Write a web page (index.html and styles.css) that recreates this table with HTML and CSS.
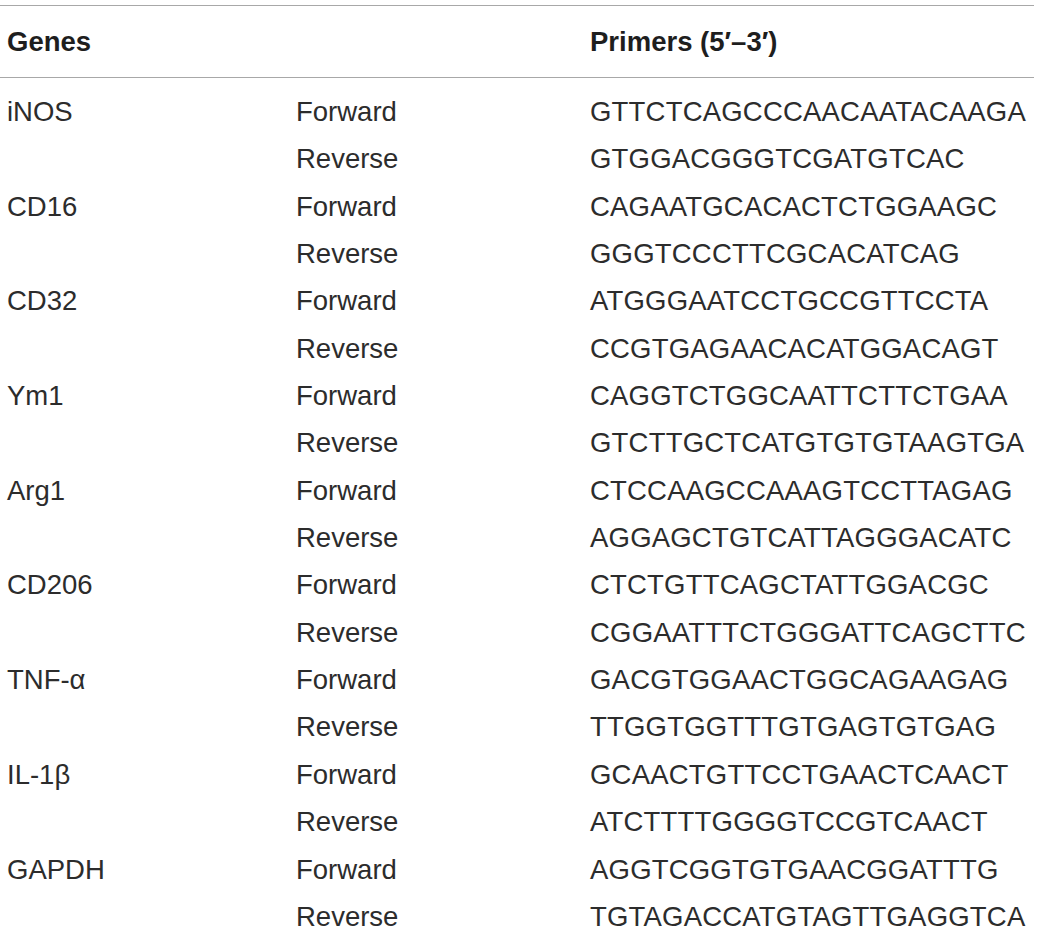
FILE: index.html
```html
<!DOCTYPE html>
<html>
<head>
<meta charset="utf-8">
<link rel="stylesheet" href="styles.css">
</head>
<body>
<div class="table">
  <div class="head">
    <div class="c1">Genes</div>
    <div class="c2"></div>
    <div class="c3">Primers (5′–3′)</div>
  </div>
  <div class="body">
    <div class="c1">iNOS</div><div class="c2">Forward</div><div class="c3">GTTCTCAGCCCAACAATACAAGA</div>
    <div class="c1"></div><div class="c2">Reverse</div><div class="c3">GTGGACGGGTCGATGTCAC</div>
    <div class="c1">CD16</div><div class="c2">Forward</div><div class="c3">CAGAATGCACACTCTGGAAGC</div>
    <div class="c1"></div><div class="c2">Reverse</div><div class="c3">GGGTCCCTTCGCACATCAG</div>
    <div class="c1">CD32</div><div class="c2">Forward</div><div class="c3">ATGGGAATCCTGCCGTTCCTA</div>
    <div class="c1"></div><div class="c2">Reverse</div><div class="c3">CCGTGAGAACACATGGACAGT</div>
    <div class="c1">Ym1</div><div class="c2">Forward</div><div class="c3">CAGGTCTGGCAATTCTTCTGAA</div>
    <div class="c1"></div><div class="c2">Reverse</div><div class="c3">GTCTTGCTCATGTGTGTAAGTGA</div>
    <div class="c1">Arg1</div><div class="c2">Forward</div><div class="c3">CTCCAAGCCAAAGTCCTTAGAG</div>
    <div class="c1"></div><div class="c2">Reverse</div><div class="c3">AGGAGCTGTCATTAGGGACATC</div>
    <div class="c1">CD206</div><div class="c2">Forward</div><div class="c3">CTCTGTTCAGCTATTGGACGC</div>
    <div class="c1"></div><div class="c2">Reverse</div><div class="c3">CGGAATTTCTGGGATTCAGCTTC</div>
    <div class="c1">TNF-α</div><div class="c2">Forward</div><div class="c3">GACGTGGAACTGGCAGAAGAG</div>
    <div class="c1"></div><div class="c2">Reverse</div><div class="c3">TTGGTGGTTTGTGAGTGTGAG</div>
    <div class="c1">IL-1β</div><div class="c2">Forward</div><div class="c3">GCAACTGTTCCTGAACTCAACT</div>
    <div class="c1"></div><div class="c2">Reverse</div><div class="c3">ATCTTTTGGGGTCCGTCAACT</div>
    <div class="c1">GAPDH</div><div class="c2">Forward</div><div class="c3">AGGTCGGTGTGAACGGATTTG</div>
    <div class="c1"></div><div class="c2">Reverse</div><div class="c3">TGTAGACCATGTAGTTGAGGTCA</div>
  </div>
</div>
</body>
</html>
```
FILE: styles.css
```css
html, body {
  margin: 0;
  padding: 0;
  background: #ffffff;
}
body {
  font-family: "Liberation Sans", Arial, sans-serif;
  font-size: 27.5px;
  color: #2c2c2c;
}
.table {
  width: 1034px;
  margin-top: 5px;
}
.head, .body {
  display: grid;
  grid-template-columns: 289px 294px 1fr;
  padding-left: 7px;
}
.head {
  border-top: 1px solid #a8a8a8;
  border-bottom: 1px solid #a8a8a8;
  height: 71px;
  align-items: center;
  font-weight: bold;
  color: #1e1e1e;
}
.body {
  padding-top: 10px;
  grid-auto-rows: 47.35px;
  line-height: 47.35px;
}
.body .c3 {
  letter-spacing: 0.2px;
}
.c1, .c2, .c3 {
  white-space: nowrap;
}
```
